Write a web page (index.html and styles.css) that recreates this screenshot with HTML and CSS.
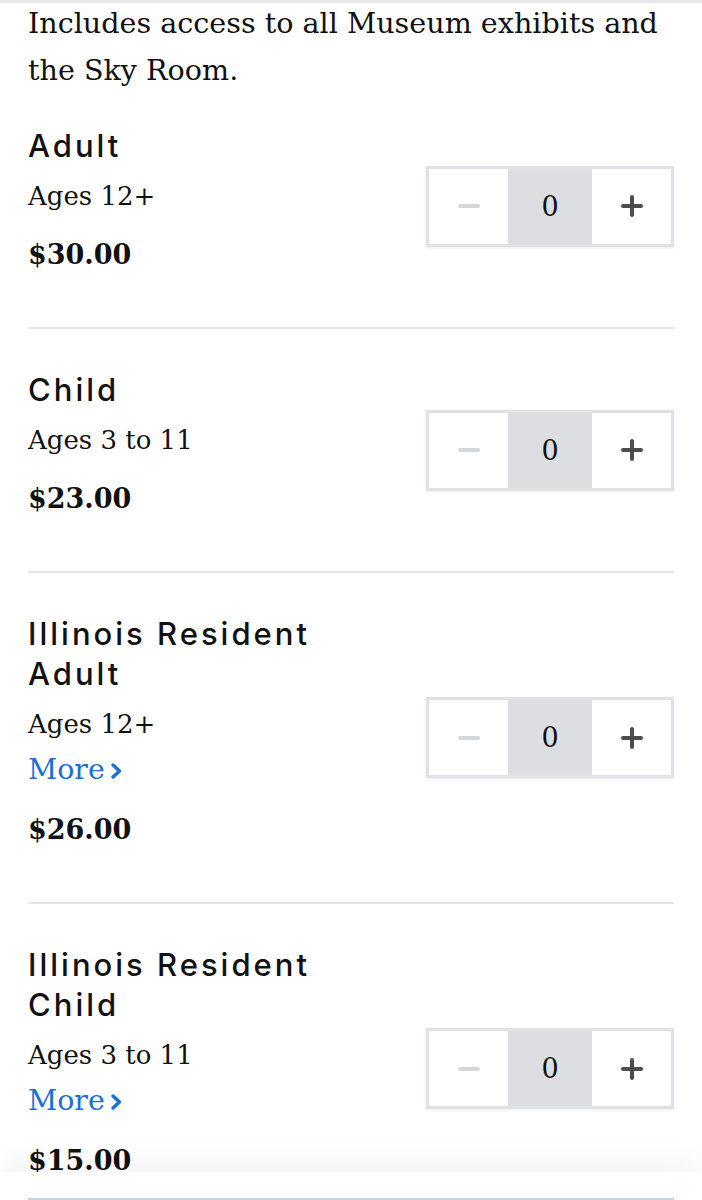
FILE: index.html
```html
<!DOCTYPE html>
<html lang="en">
<head>
<meta charset="utf-8">
<title>Tickets</title>
<link rel="stylesheet" href="styles.css">
</head>
<body>
<div class="topshade"></div>
<main class="page">
  <p class="intro">Includes access to all Museum exhibits and the Sky Room.</p>

  <section class="item first">
    <div class="info">
      <h2 class="title">Adult</h2>
      <p class="ages">Ages 12+</p>
      <p class="price">$30.00</p>
    </div>
    <div class="stepper">
      <span class="btn minus"><span class="bar"></span></span>
      <span class="count">0</span>
      <span class="btn plus"><span class="bar"></span><span class="bar v"></span></span>
    </div>
  </section>

  <section class="item">
    <div class="info">
      <h2 class="title">Child</h2>
      <p class="ages">Ages 3 to 11</p>
      <p class="price">$23.00</p>
    </div>
    <div class="stepper">
      <span class="btn minus"><span class="bar"></span></span>
      <span class="count">0</span>
      <span class="btn plus"><span class="bar"></span><span class="bar v"></span></span>
    </div>
  </section>

  <section class="item">
    <div class="info">
      <h2 class="title">Illinois Resident<br>Adult</h2>
      <p class="ages">Ages 12+</p>
      <a class="more" href="#">More<svg class="chev" viewBox="0 0 12 18" width="12" height="18"><path d="M3 3 L9.5 9 L3 15" fill="none" stroke="currentColor" stroke-width="3.4" stroke-linecap="round" stroke-linejoin="round"/></svg></a>
      <p class="price">$26.00</p>
    </div>
    <div class="stepper">
      <span class="btn minus"><span class="bar"></span></span>
      <span class="count">0</span>
      <span class="btn plus"><span class="bar"></span><span class="bar v"></span></span>
    </div>
  </section>

  <section class="item last">
    <div class="info">
      <h2 class="title">Illinois Resident<br>Child</h2>
      <p class="ages">Ages 3 to 11</p>
      <a class="more" href="#">More<svg class="chev" viewBox="0 0 12 18" width="12" height="18"><path d="M3 3 L9.5 9 L3 15" fill="none" stroke="currentColor" stroke-width="3.4" stroke-linecap="round" stroke-linejoin="round"/></svg></a>
      <p class="price">$15.00</p>
    </div>
    <div class="stepper">
      <span class="btn minus"><span class="bar"></span></span>
      <span class="count">0</span>
      <span class="btn plus"><span class="bar"></span><span class="bar v"></span></span>
    </div>
  </section>
</main>
<footer class="footer">
  <div class="footer-btn"></div>
</footer>
</body>
</html>
```

FILE: styles.css
```css
html, body {
  margin: 0;
  padding: 0;
  background: #ffffff;
}

body {
  font-family: "DejaVu Serif", "Liberation Serif", serif;
  color: #111111;
}

.topshade {
  position: fixed;
  top: 0;
  left: 0;
  right: 0;
  height: 3px;
  background: #e9e9e9;
}

.page {
  padding: 0 28px 120px;
}

.intro {
  margin: 0;
  font-size: 28.6px;
  line-height: 47px;
}

.item {
  display: flex;
  justify-content: space-between;
  align-items: center;
  padding: 41px 0 52px;
  border-bottom: 2px solid #e4e7e9;
}

.item.first {
  padding-top: 32px;
}

.item.last {
  border-bottom: none;
}

.info {
  display: flex;
  flex-direction: column;
  align-items: flex-start;
}

.title {
  margin: 0;
  font-family: "Inter", "DejaVu Sans", sans-serif;
  font-weight: 500;
  font-size: 31px;
  letter-spacing: 3px;
  line-height: 40px;
  color: #111111;
}

.ages {
  margin: 10px 0 0;
  font-size: 26px;
  line-height: 40px;
}

.more {
  margin-top: 3px;
  font-size: 28.5px;
  line-height: 45px;
  color: #1a6fd8;
  text-decoration: none;
  display: inline-flex;
  align-items: center;
  gap: 5px;
}

.chev {
  display: block;
  margin-top: 3px;
}

.price {
  margin: 19px 0 0;
  font-size: 27px;
  line-height: 40px;
  font-weight: 700;
}

.more + .price {
  margin-top: 18px;
}

.stepper {
  margin-top: 11px;
  display: flex;
  border: 3px solid #dfe1e4;
  box-shadow: 0 1px 3px rgba(0, 0, 0, 0.08);
  height: 75px;
}

.btn {
  width: 79px;
  background: #ffffff;
  display: flex;
  align-items: center;
  justify-content: center;
  position: relative;
}

.count {
  width: 84px;
  background: #dcdee2;
  display: flex;
  align-items: center;
  justify-content: center;
  font-size: 27px;
}

.bar {
  display: block;
  width: 22px;
  height: 4px;
  border-radius: 2px;
  background: #d4d6da;
}

.plus .bar {
  background: #4d4d4d;
  position: absolute;
  left: 50%;
  top: 50%;
  transform: translate(-50%, -50%);
}

.plus .bar.v {
  width: 4px;
  height: 22px;
}

.footer {
  position: fixed;
  left: 0;
  right: 0;
  bottom: 0;
  height: 28px;
  background: #ffffff;
  box-shadow: 0 -8px 30px rgba(0, 0, 0, 0.06);
  padding: 26px 28px 0;
  box-sizing: border-box;
}

.footer-btn {
  border-top: 2px solid #c3d8e5;
  height: 20px;
}
```
